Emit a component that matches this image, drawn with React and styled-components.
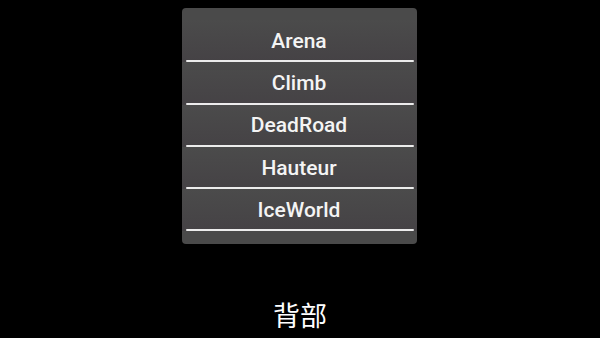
import React from 'react';
import styled, { createGlobalStyle } from 'styled-components';

const GlobalStyle = createGlobalStyle`
  html, body {
    margin: 0;
    padding: 0;
    background: #000;
  }
`;

const levels = ['Arena', 'Climb', 'DeadRoad', 'Hauteur', 'IceWorld'];

const App = () => {
    return (
        <Screen>
            <GlobalStyle />
            <ListPanel>
                {levels.map((name) => (
                    <ListItem key={name}>
                        <ItemLabel>{name}</ItemLabel>
                        <Divider />
                    </ListItem>
                ))}
            </ListPanel>
            <Caption>背部</Caption>
        </Screen>
    );
};

const Screen = styled.div`
    width: 600px;
    height: 338px;
    background: #000;
    display: flex;
    flex-direction: column;
    align-items: center;
    font-family: Roboto, 'Noto Sans CJK SC', sans-serif;
`;
const ListPanel = styled.div`
    margin-top: 8px;
    margin-left: -2px;
    width: 235px;
    height: 236px;
    box-sizing: border-box;
    padding-top: 12px;
    border-radius: 4px;
    background: #4a4a4a;
    overflow: hidden;
`;
const ListItem = styled.div`
    height: 42.3px;
    display: flex;
    flex-direction: column;
    background: linear-gradient(#4b4b4b, #454245);
`;
const ItemLabel = styled.div`
    flex: 1;
    display: flex;
    align-items: center;
    justify-content: center;
    padding-top: 1px;
    color: #f4f4f4;
    font-size: 21px;
    font-weight: 500;
`;
const Divider = styled.div`
    height: 2px;
    margin: 0 3px 0 4px;
    border-radius: 1px;
    background: #ececec;
`;
const Caption = styled.div`
    margin-top: 55px;
    color: #fff;
    font-size: 27px;
    font-family: 'Noto Sans CJK SC', sans-serif;
    line-height: 32px;
`;

export default App;
